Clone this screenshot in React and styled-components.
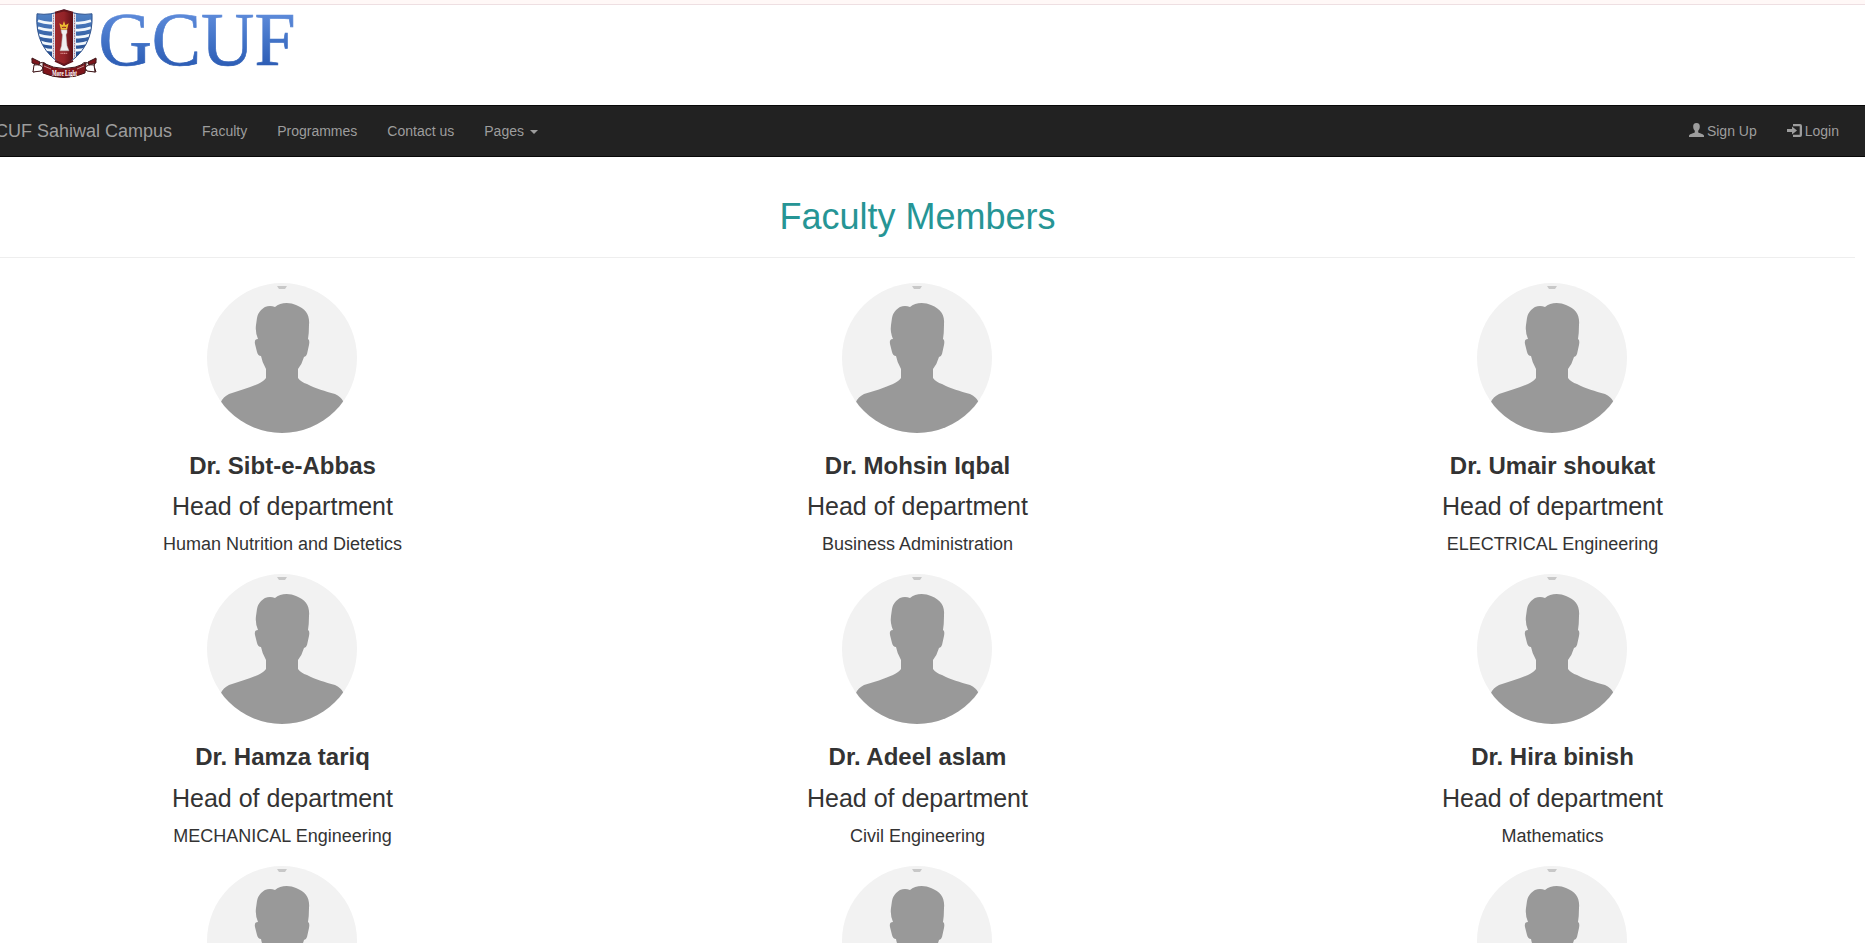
import React from "react";
import styled, { createGlobalStyle } from "styled-components";

const GlobalStyle = createGlobalStyle`
  * { box-sizing: border-box; }
  html { overflow: hidden; }
  body {
    margin: 0;
    height: 943px;
    overflow: hidden;
    background: #fff;
    color: #333;
    font: 14px/20px "Liberation Sans", Arial, sans-serif;
  }
`;

const Page = styled.div`
  height: 943px;
  overflow: hidden;
`;

const TopStrip = styled.div`
  height: 5px;
  background: #fff8f7;
  border-bottom: 1px solid #eedfe2;
`;

const Header = styled.header`
  height: 100px;
  padding-left: 30px;
`;

const Logo = styled.svg`
  display: block;
  overflow: visible;
`;

const Navbar = styled.nav`
  display: flex;
  justify-content: space-between;
  height: 52px;
  background: #222;
  border: solid #080808;
  border-width: 1px 0;
  color: #9d9d9d;
`;

const NavGroup = styled.div`
  display: flex;
  margin-left: ${(p) => p.$shift || 0}px;
  margin-right: ${(p) => p.$end || 0}px;
`;

const Brand = styled.a`
  padding: 15px;
  font-size: 18px;
  white-space: nowrap;
`;

const NavLink = styled.a`
  display: flex;
  align-items: flex-start;
  padding: 15px;
  white-space: nowrap;
`;

const NavIcon = styled.svg`
  width: 15px;
  height: 14px;
  margin: 2px 3px 0 0;
  fill: currentColor;
`;

const Caret = styled.span`
  margin: 9px 0 0 6px;
  border: 4px solid transparent;
  border-top-color: currentColor;
  border-bottom: 0;
`;

const Main = styled.main`
  width: 1875px;
  margin-left: -20px;
`;

const Title = styled.h1`
  margin: 0;
  padding: 40px 0 20px;
  border-bottom: 1px solid #eee;
  color: #269595;
  font-size: 36px;
  font-weight: 400;
  line-height: 40px;
  text-align: center;
`;

const Grid = styled.div`
  display: grid;
  grid-template-columns: repeat(3, 635px);
  grid-auto-rows: 291.4px;
  margin: 25px -15px 0;
`;

const Card = styled.article`
  display: flex;
  flex-direction: column;
  align-items: center;
`;

const Avatar = styled.svg`
  width: 150px;
  height: 150px;
  margin-right: 1px;
  border-radius: 50%;
  background: #f2f2f2;
`;

const Name = styled.h3`
  margin: 19px 0 0;
  font-size: 24px;
  line-height: 28px;
`;

const Role = styled.p`
  margin: 12.25px 0 0;
  font-size: 25px;
  line-height: 28px;
`;

const Department = styled.p`
  margin: 14px 0 0;
  font-size: 18px;
  line-height: 20px;
`;

const members = [
  ["Dr. Sibt-e-Abbas", "Human Nutrition and Dietetics"],
  ["Dr. Mohsin Iqbal", "Business Administration"],
  ["Dr. Umair shoukat", "ELECTRICAL Engineering"],
  ["Dr. Hamza tariq", "MECHANICAL Engineering"],
  ["Dr. Adeel aslam", "Civil Engineering"],
  ["Dr. Hira binish", "Mathematics"],
  [], [], [],
];

function GcufLogo() {
  return (
    <Logo width="270" height="78" viewBox="30 5 270 78">
      <defs>
        <linearGradient id="letters" gradientUnits="userSpaceOnUse" x1="0" y1="12" x2="0" y2="67">
          <stop offset="0" stopColor="#5f8cdb" />
          <stop offset=".5" stopColor="#4374c8" />
          <stop offset="1" stopColor="#2c5cb4" />
        </linearGradient>
        <linearGradient id="blue" x1="0" y1="0" x2="0" y2="1">
          <stop offset="0" stopColor="#5588cc" />
          <stop offset="1" stopColor="#163a7c" />
        </linearGradient>
        <linearGradient id="red">
          <stop offset="0" stopColor="#9d2a2d" />
          <stop offset=".5" stopColor="#942328" />
          <stop offset="1" stopColor="#5e1015" />
        </linearGradient>
        <clipPath id="shield">
          <path d="M37 13Q51 15 64 9Q78 15 92 13Q94 48 64 65Q34 48 37 13Z" />
        </clipPath>
      </defs>
      <g transform="translate(0 .8)">
        <g clipPath="url(#shield)">
          <path fill="url(#blue)" d="M34 8h60v60H34z" />
          <g fill="none" stroke="#f2f8fc" strokeWidth="2.800">
            <path d="M38 20Q46 23 54 22M38 27Q46 30 54 29M38 34Q46 37 54 36M40 41Q47 44 54 43M44 48Q49 50 54 49" />
            <path d="M91 20Q83 23 74 22M91 27Q83 30 74 29M91 34Q83 37 74 36M89 41Q82 44 74 43M85 48Q80 50 74 49" />
          </g>
          <path fill="#dce3ef" d="M52 9h24v50L64 65 52 58z" />
          <path fill="none" stroke="#9b5361" strokeWidth=".8" strokeDasharray="1.5 1" d="M53.500 12v47M74.500 12v47" />
          <path fill="url(#red)" d="M55 9h18v52l-9 5-9-5z" />
        </g>
        <path fill="none" stroke="#31548e" strokeWidth="1" d="M37 13Q51 15 64 9Q78 15 92 13Q94 48 64 65Q34 48 37 13Z" />
        <path fill="none" stroke="#64161d" strokeWidth="2" d="M55 12L64 9.500 73 12M55 60l9 4 9-4" />
        <path fill="#f1eff0" stroke="#b9b4b5" strokeWidth=".5" d="M61 29h6v3l-1 2 1 11 2 5h-9l1.500-5 1-11-1-2z" />
        <path fill="none" stroke="#edbd32" strokeWidth="1.500" d="M61.500 28l-1-4 2.500 1.500 1-3 1 3 2.500-1.500-1 4z" />
        <path stroke="#d78b8a" strokeWidth="1.200" d="M60.500 52.500h7" strokeDasharray="1.2 .5" />
      </g>
      <g stroke="#3f171a" strokeWidth="1">
        <path fill="#f2eeed" d="M32 59l8 4q5-2 7 3l-4 4-10 2 2-6zM96 59l-8 4q-5-2-7 3l4 4 11 2-2-6z" />
        <path fill="#7d171c" d="M32 58l8 4-1 3-7-2zM96 58l-8 4 1 3 7-2z" />
        <path fill="#fff" d="M34 65q7-1 9 3l-2 3-8 1zM94 65q-7-1-9 3l2 3 8 1z" />
        <path fill="#7e151b" d="M43 63q21 11 43 0l-1 10q-21 9-42 0z" />
      </g>
      <path fill="none" stroke="#d9c5c4" strokeWidth=".7" d="M44 66l7 3M84 66l-7 3" />
      <text x="52" y="75.500" fill="#fff" fontFamily="Liberation Serif, serif" fontSize="7.500" fontWeight="700" textLength="25" lengthAdjust="spacingAndGlyphs">More Light</text>
      <text x="98.500" y="65" fill="url(#letters)" stroke="url(#letters)" strokeWidth=".7" fontFamily="Liberation Serif, serif" fontSize="77" textLength="197" lengthAdjust="spacingAndGlyphs">GCUF</text>
    </Logo>
  );
}

function Silhouette() {
  return (
    <Avatar viewBox="0 0 150 150">
      <path fill="#c8c8c8" d="M70 3h10l-2 3h-6z" />
      <path fill="#999" d="M50 35C51 29 55 26 58 24Q63 22 68 24C73 19 83 19 89 22C99 26 103 32 102 42Q102 50 101 56Q103 57 102 62L100 71Q99 74 97 74Q95 81 91 86V95Q94 99 100 101C109 106 118 108 128 111Q134 114 136 118L150 150H0L14 119Q16 114 22 111C32 108 42 105 51 101Q57 98 59 95V86Q55 79 54 73Q51 73 50 69L48 61Q47 56 51 56Q48 49 49 42Z" />
    </Avatar>
  );
}

export default function App() {
  return (
    <Page>
      <GlobalStyle />
      <TopStrip />
      <Header><GcufLogo /></Header>
      <Navbar>
        <NavGroup $shift={-34}>
          <Brand>GCUF Sahiwal Campus</Brand>
          <NavLink>Faculty</NavLink>
          <NavLink>Programmes</NavLink>
          <NavLink>Contact us</NavLink>
          <NavLink>Pages <Caret /></NavLink>
        </NavGroup>
        <NavGroup $end={11}>
          <NavLink>
            <NavIcon viewBox="0 0 15 14"><path d="M7.500 0C5.100 0 4 1.600 4.200 4c.1 1.700.8 3 1.600 3.800v1.400C5 10.400.5 10.700 0 12.700V14h15v-1.300c-.5-2-5-2.300-5.800-3.500V7.800c.8-.8 1.500-2.100 1.600-3.800C11 1.600 9.900 0 7.500 0z" /></NavIcon>
            Sign Up
          </NavLink>
          <NavLink>
            <NavIcon viewBox="0 0 15 14"><path d="M6 1h7q2 0 2 2v9q0 2-2 2H6v-2.200h6.700V3.200H6zM5 3.500l5 4-5 4V9H0V6h5z" /></NavIcon>
            Login
          </NavLink>
        </NavGroup>
      </Navbar>
      <Main>
        <Title>Faculty Members</Title>
        <Grid>
          {members.map(([name, department], i) => (
            <Card key={i}>
              <Silhouette />
              {name && (
                <>
                  <Name>{name}</Name>
                  <Role>Head of department</Role>
                  <Department>{department}</Department>
                </>
              )}
            </Card>
          ))}
        </Grid>
      </Main>
    </Page>
  );
}
